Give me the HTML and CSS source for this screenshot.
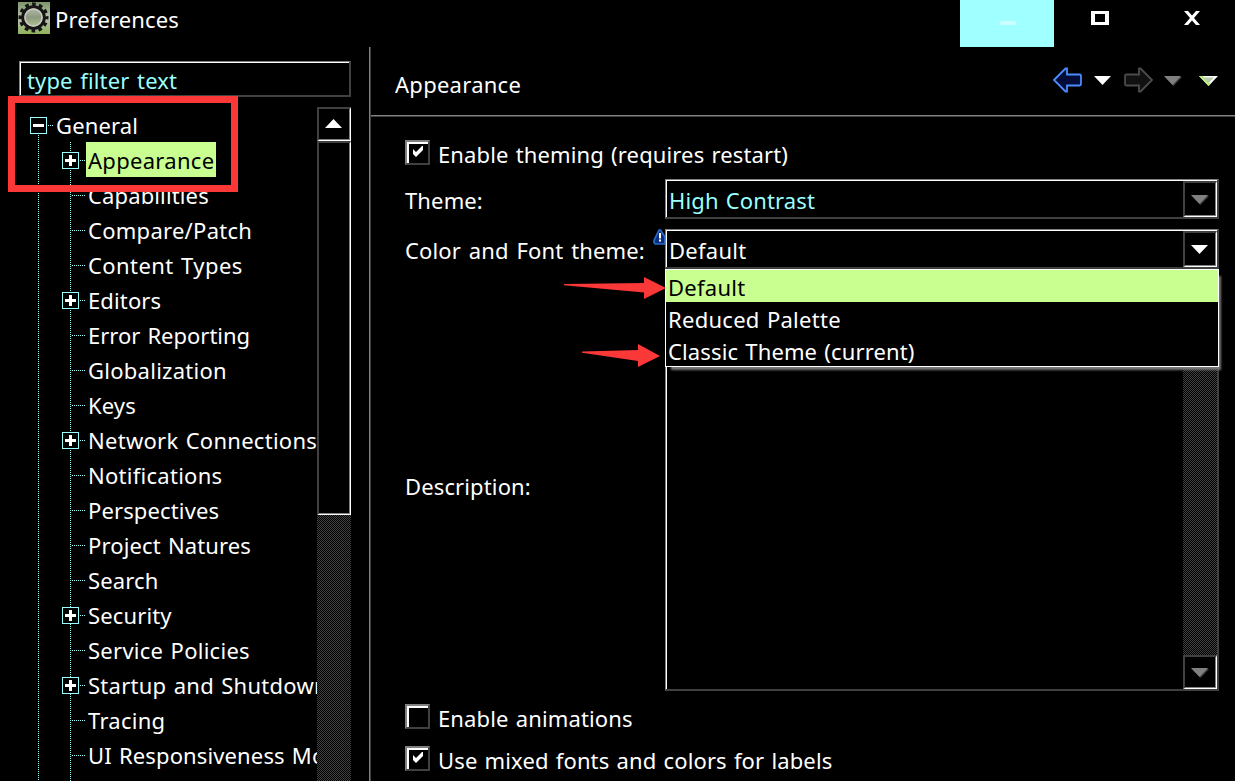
FILE: index.html
```html
<!DOCTYPE html>
<html lang="en">
<head>
<meta charset="utf-8">
<title>Preferences</title>
<link rel="stylesheet" href="styles.css">
</head>
<body>
<div class="window">
  <header class="titlebar">
    <svg class="app-icon" width="32" height="32" viewBox="0 0 32 32">
      <defs><linearGradient id="g" x1="0" y1="0" x2="0" y2="1"><stop offset="0" stop-color="#7c9568"/><stop offset=".5" stop-color="#b8c2ae"/><stop offset="1" stop-color="#8fb35c"/></linearGradient>
      <linearGradient id="h" x1="0" y1="0" x2="0" y2="1"><stop offset="0" stop-color="#b8bdb0"/><stop offset=".5" stop-color="#8d9a80"/><stop offset="1" stop-color="#b4cc92"/></linearGradient></defs>
      <rect width="32" height="32" fill="url(#g)"/>
      <circle cx="15.500" cy="15.500" r="13" fill="none" stroke="#151515" stroke-width="4" stroke-dasharray="3.600 3.207" stroke-dashoffset="1.800"/>
      <circle cx="15.500" cy="15.500" r="10.800" fill="url(#h)" stroke="#151515" stroke-width="3"/>
      <circle cx="15.500" cy="15.500" r="8.500" fill="none" stroke="#c8cbc2" stroke-width="1.500"/>
    </svg>
    <span class="t title-text">Preferences</span>
    <div class="win-buttons">
      <div class="win-btn minimize"><svg width="16" height="4"><rect width="16" height="4" fill="#cff"/></svg></div>
      <div class="win-btn maximize"><svg width="18" height="14"><path fill-rule="evenodd" d="M0 0h18v14H0zM4 3v8h10V3z" fill="#fff"/></svg></div>
      <div class="win-btn close"><svg width="16" height="14"><path d="M0 0h4l4 4.500L12 0h4l-6 7 6 7h-4L8 9.500 4 14H0l6-7z" fill="#fff"/></svg></div>
    </div>
  </header>
  <div class="body">
    <aside class="sidebar">
      <div class="filter"><span class="t filter-text">type filter text</span></div>
      <div class="tree-wrap">
        <div class="tree">
          <div class="node root"><i class="box"></i><i class="dash"></i><span class="t">General</span></div>
          <div class="children">
            <div class="node"><i class="box plus"></i><i class="dash"></i><span class="t sel">Appearance</span></div>
            <div class="node"><i class="dash long"></i><span class="t">Capabilities</span></div>
            <div class="node"><i class="dash long"></i><span class="t wide">Compare/Patch</span></div>
            <div class="node"><i class="dash long"></i><span class="t wider">Content Types</span></div>
            <div class="node"><i class="box plus"></i><i class="dash"></i><span class="t">Editors</span></div>
            <div class="node"><i class="dash long"></i><span class="t tight">Error Reporting</span></div>
            <div class="node"><i class="dash long"></i><span class="t wide">Globalization</span></div>
            <div class="node"><i class="dash long"></i><span class="t">Keys</span></div>
            <div class="node"><i class="box plus"></i><i class="dash"></i><span class="t wide">Network Connections</span></div>
            <div class="node"><i class="dash long"></i><span class="t wide">Notifications</span></div>
            <div class="node"><i class="dash long"></i><span class="t">Perspectives</span></div>
            <div class="node"><i class="dash long"></i><span class="t">Project Natures</span></div>
            <div class="node"><i class="dash long"></i><span class="t">Search</span></div>
            <div class="node"><i class="box plus"></i><i class="dash"></i><span class="t">Security</span></div>
            <div class="node"><i class="dash long"></i><span class="t wide">Service Policies</span></div>
            <div class="node"><i class="box plus"></i><i class="dash"></i><span class="t wide">Startup and Shutdown</span></div>
            <div class="node"><i class="dash long"></i><span class="t wide">Tracing</span></div>
            <div class="node"><i class="dash long"></i><span class="t">UI Responsiveness Monitoring</span></div>
          </div>
        </div>
        <div class="scrollbar">
          <div class="raised arrow-btn up"><svg width="17" height="9"><path d="M8.500 0L17 9H0z" fill="#fff"/></svg></div>
          <div class="raised thumb"></div>
        </div>
      </div>
      <div class="marker-box"></div>
    </aside>
    <main class="main">
      <div class="page-head">
        <span class="t head-text">Appearance</span>
        <div class="tools">
          <svg width="30" height="26" viewBox="0 0 30 26"><path d="M1 13L12.500 1.500H14V7.500H26.500q1.500 0 1.500 1.500v8q0 1.500-1.500 1.500H14v6H12.500z" fill="#030c38" stroke="#4b8df8" stroke-width="1.800"/></svg>
          <svg class="tri1" width="17" height="9"><path d="M0 0h17L8.500 9z" fill="#fff"/></svg>
          <svg class="fwd" width="30" height="26" viewBox="0 0 30 26"><path d="M28 13L16.500 1.500H15v6H2.500q-1.500 0-1.500 1.500v8q0 1.500 1.500 1.500H15v6h1.500z" fill="#111" stroke="#4c4c4c" stroke-width="1.800"/></svg>
          <svg class="tri2" width="18" height="10"><path d="M1 1h17l-8.500 9z" fill="#404040"/><path d="M0 0h17L8.500 9z" fill="#808080"/></svg>
          <svg class="tri3" width="19" height="10"><path d="M0 0h19l-9.500 10z" fill="#fff"/><path d="M0 0l9.500 10 2-2L4 0z" fill="#b4f078"/><path d="M4 1.500h11L9.500 7z" fill="#b9c9ae"/></svg>
        </div>
      </div>
      <div class="form">
        <div class="check-row first"><i class="check"><svg width="12" height="12"><path d="M1 3l3 3 6-6h1v4L4 11 1 8z" fill="#fff"/></svg></i><span class="t">Enable theming (requires restart)</span></div>
        <div class="field"><span class="t label">Theme:</span>
          <div class="combo"><span class="t cyan">High Contrast</span><div class="raised drop"><svg width="18" height="10"><path d="M1 1h17l-8.500 9z" fill="#404040"/><path d="M0 0h17L8.500 9z" fill="#808080"/></svg></div></div></div>
        <div class="field"><span class="t label theme-label">Color and Font theme:</span>
          <svg class="warn" width="12" height="16" viewBox="0 0 12 16"><path d="M6 1.200h1.500L12 8v7H2.200L1 13.500V11.500z" fill="#092c7d" stroke="#2b68c4" stroke-width="1.700"/><path d="M6 4h2v5.500H6zm0 6.500h2v2H6z" fill="#fff"/></svg>
          <div class="combo"><span class="t wide">Default</span><div class="raised drop"><svg width="18" height="10"><path d="M0 0h17L8.500 9z" fill="#fff"/></svg></div></div>
          <div class="popup">
            <div class="option active"><span class="t wide">Default</span></div>
            <div class="option"><span class="t wide">Reduced Palette</span></div>
            <div class="option"><span class="t">Classic Theme (current)</span></div>
          </div>
        </div>
        <div class="field desc"><span class="t label">Description:</span>
          <div class="textarea"><div class="track"><div class="raised arrow-btn down"><svg width="18" height="10"><path d="M1 1h17l-8.500 9z" fill="#404040"/><path d="M0 0h17L8.500 9z" fill="#808080"/></svg></div></div></div></div>
        <div class="check-row"><i class="check"></i><span class="t">Enable animations</span></div>
        <div class="check-row"><i class="check"><svg width="12" height="12"><path d="M1 3l3 3 6-6h1v4L4 11 1 8z" fill="#fff"/></svg></i><span class="t">Use mixed fonts and colors for labels</span></div>
      </div>
      <svg class="pointers" width="104" height="92" viewBox="0 0 104 92"><path d="M1 7L81 6V0l22 11-22 11v-6.500L1 8.300zM19 74.500l56-1.500v-6l22 12-22 11v-6L19 75.800z" fill="#fb3838"/></svg>
    </main>
  </div>
</div>
</body>
</html>
```
FILE: styles.css
```css
* { box-sizing: border-box; }
body { margin: 0; background: #000; color: #fff; font: 22px/35px "Noto Sans", "Open Sans", sans-serif; letter-spacing: .13px; word-spacing: 1.3px; }
.window { width: 1235px; height: 781px; overflow: hidden; display: flex; flex-direction: column; }
.t { white-space: nowrap; }
.wide { letter-spacing: .27px; }
.wider { letter-spacing: .42px; }
.tight { letter-spacing: 0; }
svg { display: block; flex: none; }
.titlebar { height: 47px; flex: none; display: flex; align-items: flex-start; padding-left: 18px; }
.app-icon { margin-top: 2px; }
.title-text { margin: 2px 0 0 5px; }
.win-buttons { margin-left: auto; display: flex; }
.win-btn { width: 93px; height: 47px; display: flex; justify-content: center; padding-top: 11px; }
.minimize { width: 94px; background: #a0ffff; padding: 21px 0 0 2px; }
.maximize { padding-right: 1px; }
.close { width: 88px; padding-left: 2px; }
.body { flex: 1; min-height: 0; display: flex; }
.sidebar { width: 371px; flex: none; padding: 14px 20px 0 19px; border-right: 1px solid #404040; box-shadow: inset -1px 0 #808080; position: relative; display: flex; flex-direction: column; }
.filter { height: 36px; flex: none; margin-right: -1px; border: 2px solid #404040; border-top: 1px solid #808080; border-left: 1px solid #808080; box-shadow: inset 1px 1px #fff; color: #9ff; padding: 1px 0 0 7px; }
.filter-text { word-spacing: 1.8px; }
.tree-wrap { flex: 1; min-height: 0; margin-top: 10px; display: flex; }
.tree { width: 298px; flex: none; overflow: hidden; position: relative; }
.tree::before { content: ""; position: absolute; left: 19px; top: 28px; bottom: 0; width: 1px; background: repeating-linear-gradient(#9ff 0 1px, #000 1px 2px); }
.children { margin-left: 43px; padding-bottom: 12px; background: repeating-linear-gradient(#9ff 0 1px, #000 1px 2px) 8px 0 / 1px 100% no-repeat; }
.node { height: 35px; display: flex; align-items: center; }
.root { padding-left: 11px; }
.box { width: 17px; height: 17px; flex: none; margin-top: 2px; border: 1px solid #9ff; background: linear-gradient(#fff, #fff) center / 11px 3px no-repeat #000; }
.plus { background: linear-gradient(#fff, #fff) center / 11px 3px no-repeat, linear-gradient(#fff, #fff) center / 3px 11px no-repeat #000; }
.dash { width: 5px; height: 1px; flex: none; margin: 2px 1px 0 1px; background: repeating-linear-gradient(90deg, #9ff 0 1px, #000 1px 2px); }
.dash.long { width: 13px; margin-left: 10px; }
.node .t { padding: 1px 2px 0; height: 35px; line-height: 34px; }
.node .sel { background: #c8ff90; color: #000; width: 130px; letter-spacing: .3px; }
.scrollbar { width: 34px; background: repeating-conic-gradient(#404040 0 25%, #000 0 50%) 0 0 / 2px 2px; }
.raised { background: #000; border: 2px solid #404040; border-right: 1px solid #fff; border-bottom: 1px solid #fff; box-shadow: inset -1px -1px #808080; display: flex; align-items: center; justify-content: center; }
.arrow-btn { width: 34px; height: 34px; padding-right: 2px; }
.up { padding-bottom: 3px; }
.thumb { width: 34px; height: 374px; }
.marker-box { position: absolute; left: 8px; top: 49px; width: 230px; height: 96px; border: 7px solid #fb3838; }
.main { flex: 1; position: relative; min-width: 0; }
.page-head { height: 70px; border-bottom: 1px solid #404040; box-shadow: inset 0 -1px #808080; display: flex; padding-left: 24px; }
.head-text { margin-top: 20px; letter-spacing: .27px; }
.tools { display: flex; margin: 20px 17px 0 auto; }
.tri1 { margin: 9px 0 0 11px; }
.fwd { margin-left: 13px; }
.tri2 { margin: 9px 0 0 10px; }
.tri3 { margin: 9px 0 0 17px; }
.form { padding: 12px 16px 0 34px; }
.check-row { display: flex; height: 42px; padding-top: 3px; }
.check-row.first { height: 50px; padding-top: 11px; }
.check { width: 25px; height: 25px; flex: none; margin-right: 8px; border: 2px solid #404040; border-top-color: #808080; border-left-color: #808080; box-shadow: inset 2px 2px #fff; padding: 4px 0 0 5px; }
.check + .t { margin-top: -3px; }
.field { position: relative; display: flex; align-items: center; height: 40px; margin-bottom: 10px; }
.label { width: 260px; flex: none; padding-top: 2px; }
.theme-label { word-spacing: 2px; }
.combo { flex: 1; height: 40px; border: 2px solid #404040; border-top: 1px solid #808080; border-left: 1px solid #808080; box-shadow: inset 1px 1px #fff; display: flex; justify-content: space-between; padding: 1px 0 1px 3px; }
.combo .t { padding-top: 2px; }
.cyan { color: #9ff; }
.drop { width: 34px; height: 36px; padding-right: 2px; box-shadow: inset -1px -1px #808080; }
.warn { position: absolute; left: 248px; top: 0; }
.popup { position: absolute; z-index: 2; left: 260px; top: 40px; width: 554px; height: 98px; background: #000; border: 1px solid #fff; box-shadow: 4px 5px 2px -2px #777; }
.option { height: 32px; line-height: 34px; padding-left: 2px; }
.active { background: #c8ff90; color: #000; }
.desc { height: 412px; }
.textarea { flex: 1; height: 412px; border: 2px solid #404040; border-top: 1px solid #808080; border-left: 1px solid #808080; box-shadow: inset 1px 1px #fff; display: flex; justify-content: flex-end; }
.track { width: 34px; background: repeating-conic-gradient(#404040 0 25%, #000 0 50%) 0 0 / 2px 2px; display: flex; align-items: flex-end; }
.pointers { position: absolute; left: 192px; top: 230px; z-index: 3; }
```
